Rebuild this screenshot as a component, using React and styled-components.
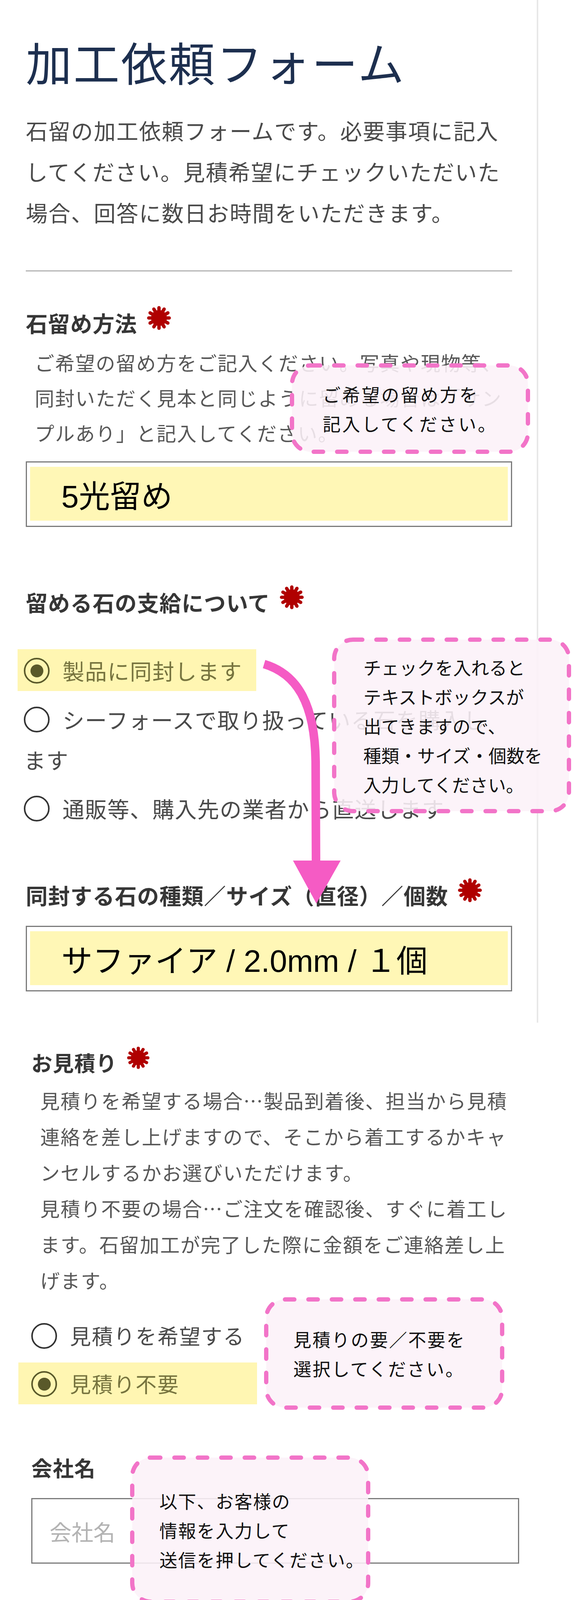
import React from 'react';
import styled, { createGlobalStyle } from 'styled-components';

const GlobalStyle = createGlobalStyle`
  html, body {
    margin: 0;
    padding: 0;
    background: #fff;
  }
  body {
    font-family: "Noto Sans CJK JP", "Noto Sans", sans-serif;
    color: #444;
  }
  * {
    box-sizing: border-box;
  }
`;

const Page = styled.div`
  width: 1472px;
`;

const Panel = styled.section`
  position: relative;
  width: ${(p) => p.$width};
  padding: ${(p) => p.$padding};
  border-right: ${(p) => (p.$rule ? '4px solid #e8e8e8' : '0')};
`;

const Title = styled.h1`
  margin: 0;
  font-size: 118px;
  line-height: 144px;
  font-weight: 400;
  letter-spacing: 4px;
  color: #1d2f4f;
`;

const Intro = styled.p`
  margin: 51px 0 0;
  font-size: 56px;
  line-height: 105px;
  letter-spacing: 2px;
  color: #4a4a4a;
`;

const Divider = styled.hr`
  margin: 97px 0 0;
  border: 0;
  height: 3px;
  background: #b4b4b4;
`;

const Label = styled.div`
  display: flex;
  align-items: center;
  gap: 25px;
  margin-top: ${(p) => p.$top}px;
  font-size: ${(p) => p.$size}px;
  line-height: 80px;
  font-weight: 700;
  letter-spacing: 1px;
  color: #363636;
`;

const Star = styled.svg`
  flex-shrink: 0;
  margin-bottom: 24px;
  fill: #b00000;
  stroke: #b00000;
`;

const Note = styled.p`
  margin: ${(p) => p.$top}px 0 0 23px;
  font-size: 50px;
  line-height: ${(p) => p.$lh}px;
  letter-spacing: 2px;
  color: #575757;
`;

const InputBox = styled.div`
  display: flex;
  margin-top: ${(p) => p.$top}px;
  height: 168px;
  border: 3px solid #7b7b7b;
  background: #fff;
`;

const Filled = styled.div`
  flex: 1;
  display: flex;
  align-items: center;
  margin: 11px 8px 13px;
  padding-left: 80px;
  background: #fff7b6;
  font-family: "Liberation Sans", "Noto Sans CJK JP", sans-serif;
  font-size: 80px;
  color: #000;
`;

const Placeholder = styled.div`
  flex: 1;
  display: flex;
  align-items: center;
  padding-left: 44px;
  font-size: 56px;
  color: #b3b3b3;
`;

const Options = styled.div`
  display: flex;
  flex-direction: column;
  gap: ${(p) => p.$gap}px;
  margin-top: ${(p) => p.$top}px;
  padding-right: 40px;
`;

const Option = styled.label`
  display: block;
  align-self: ${(p) => (p.$highlight ? 'flex-start' : 'stretch')};
  width: ${(p) => (p.$highlight ? '611px' : 'auto')};
  margin-left: -${(p) => p.$shift}px;
  padding: 2px 0 2px ${(p) => p.$inset}px;
  background: ${(p) => (p.$highlight ? '#fff6b2' : 'transparent')};
  font-size: ${(p) => p.$size}px;
  line-height: 103px;
  letter-spacing: ${(p) => p.$ls}px;
  color: ${(p) => (p.$highlight ? '#77743f' : '#4a4a4a')};
`;

const Radio = styled.span`
  display: inline-flex;
  align-items: center;
  justify-content: center;
  vertical-align: top;
  width: 66px;
  height: 66px;
  margin: 20px 33px 0 0;
  border: 4px solid ${(p) => (p.$checked ? '#5a592a' : '#333')};
  border-radius: 50%;

  &::after {
    content: '';
    display: ${(p) => (p.$checked ? 'block' : 'none')};
    width: 33px;
    height: 33px;
    border-radius: 50%;
    background: #5a592a;
  }
`;

const CalloutBox = styled.div`
  position: absolute;
  z-index: 2;
  left: ${(p) => p.$x}px;
  top: ${(p) => p.$y}px;
  width: ${(p) => p.$w}px;
  height: ${(p) => p.$h}px;
  display: flex;
  flex-direction: column;
  justify-content: center;
  padding-left: ${(p) => p.$pad}px;
  font-size: 46px;
  line-height: 75px;
  letter-spacing: ${(p) => p.$ls}px;
  color: #111;
`;

const CalloutFrame = styled.svg`
  position: absolute;
  z-index: -1;
  left: 0;
  top: 0;
  overflow: visible;
`;

const ArrowLayer = styled.svg`
  position: absolute;
  z-index: 1;
  left: 0;
  top: 0;
  pointer-events: none;
`;

const Asterisk = ({ size = 62 }) => (
  <Star width={size} height={size} viewBox="0 0 64 64">
    <circle cx="32" cy="32" r="21" stroke="none" />
    <g strokeWidth="9" strokeLinecap="round">
      {[0, 30, 60, 90, 120, 150].map((a) => (
        <line key={a} x1="32" y1="5" x2="32" y2="59" transform={`rotate(${a} 32 32)`} />
      ))}
    </g>
  </Star>
);

const Callout = ({ x, y, w, h, pad, ls, lines }) => (
  <CalloutBox $x={x} $y={y} $w={w} $h={h} $pad={pad} $ls={ls}>
    <CalloutFrame width={w} height={h}>
      <rect
        x="5.5"
        y="5.5"
        width={w - 11}
        height={h - 11}
        rx="48"
        fill="rgba(252, 241, 248, 0.88)"
        stroke="#f274c8"
        strokeWidth="11"
        strokeDasharray="24 36"
        strokeLinecap="round"
      />
    </CalloutFrame>
    {lines.map((line) => (
      <div key={line}>{line}</div>
    ))}
  </CalloutBox>
);

const Arrow = () => (
  <ArrowLayer width="1472" height="2602" viewBox="0 0 1472 2602">
    <path
      d="M 676 1700 C 760 1725, 806 1800, 808 1950 L 809 2215"
      fill="none"
      stroke="#f55bc4"
      strokeWidth="22"
    />
    <polygon points="750,2203 872,2203 810,2313" fill="#f55bc4" />
  </ArrowLayer>
);

export default function App() {
  return (
    <Page lang="ja">
      <GlobalStyle />
      <Panel $width="1378px" $padding="85px 63px 80px 66px" $rule>
        <Title>加工依頼フォーム</Title>
        <Intro>
          石留の加工依頼フォームです。必要事項に記入してください。見積希望にチェックいただいた場合、回答に数日お時間をいただきます。
        </Intro>
        <Divider />

        <Label $top={88} $size={56}>
          石留め方法
          <Asterisk />
        </Label>
        <Note $top={13} $lh={90}>
          ご希望の留め方をご記入ください。写真や現物等、同封いただく見本と同じように留める場合は「サンプルあり」と記入してください。
        </Note>
        <InputBox $top={29}>
          <Filled>5光留め</Filled>
        </InputBox>

        <Label $top={149} $size={56}>
          留める石の支給について
          <Asterisk />
        </Label>
        <Options $top={78} $gap={18}>
          <Option $highlight $shift={21} $inset={16} $size={56} $ls={1.5}>
            <Radio $checked />
            製品に同封します
          </Option>
          <Option $shift={21} $inset={16} $size={56} $ls={1.5}>
            <Radio />
            シーフォースで取り扱っている石を購入します
          </Option>
          <Option $shift={21} $inset={16} $size={56} $ls={1.5}>
            <Radio />
            通販等、購入先の業者から直送します
          </Option>
        </Options>

        <Label $top={126} $size={56}>
          同封する石の種類／サイズ（直径）／個数
          <Asterisk />
        </Label>
        <InputBox $top={36}>
          <Filled>サファイア / 2.0mm / １個</Filled>
        </InputBox>

        <Callout
          x={742}
          y={930}
          w={615}
          h={232}
          pad={84}
          ls={4}
          lines={['ご希望の留め方を', '記入してください。']}
        />
        <Callout
          x={850}
          y={1632}
          w={612}
          h={450}
          pad={80}
          ls={0}
          lines={['チェックを入れると', 'テキストボックスが', '出てきますので、', '種類・サイズ・個数を', '入力してください。']}
        />
        <Arrow />
      </Panel>

      <Panel $width="1472px" $padding="61px 143px 0 80px">
        <Label $top={0} $size={54}>
          お見積り
          <Asterisk size={58} />
        </Label>
        <Note $top={9} $lh={92}>
          見積りを希望する場合…製品到着後、担当から見積連絡を差し上げますので、そこから着工するかキャンセルするかお選びいただけます。
          <br />
          見積り不要の場合…ご注文を確認後、すぐに着工します。石留加工が完了した際に金額をご連絡差し上げます。
        </Note>
        <Options $top={43} $gap={16}>
          <Option $shift={33} $inset={33} $size={54} $ls={2}>
            <Radio />
            見積りを希望する
          </Option>
          <Option $highlight $shift={33} $inset={33} $size={54} $ls={2}>
            <Radio $checked />
            見積り不要
          </Option>
        </Options>

        <Label $top={122} $size={54}>
          会社名
        </Label>
        <InputBox $top={38}>
          <Placeholder>会社名</Placeholder>
        </InputBox>

        <Label $top={148} $size={54}>
          お名前
          <Asterisk size={58} />
        </Label>

        <Callout
          x={676}
          y={703}
          w={615}
          h={288}
          pad={75}
          ls={3}
          lines={['見積りの要／不要を', '選択してください。']}
        />
        <Callout
          x={333}
          y={1108}
          w={615}
          h={380}
          pad={75}
          ls={2}
          lines={['以下、お客様の', '情報を入力して', '送信を押してください。']}
        />
      </Panel>
    </Page>
  );
}
